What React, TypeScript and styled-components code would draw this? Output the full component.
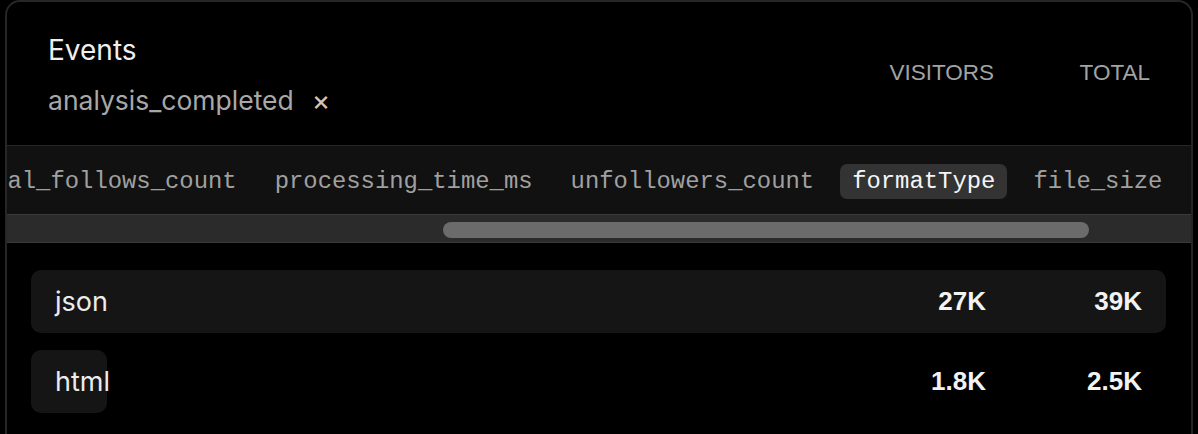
import React from "react";
import styled, { createGlobalStyle } from "styled-components";

const GlobalStyle = createGlobalStyle`
  html, body {
    margin: 0;
    padding: 0;
    background: #000;
    overflow: hidden;
  }
  body {
    font-family: Inter, "Noto Sans", sans-serif;
  }
`;

// what the property strip holds, and where it is scrolled to
const props = [
  "followers_count",
  "following_count",
  "import_source",
  "mutual_follows_count",
  "processing_time_ms",
  "unfollowers_count",
  "formatType",
  "file_size",
  "platform",
  "device",
];
const activeProp = "formatType";
const scroll = { left: 799, content: 2170, view: 1184 };

const rows = [
  { name: "json", visitors: 27000, total: 39000 },
  { name: "html", visitors: 1800, total: 2500 },
];

function fmt(n: number) {
  if (n >= 10000) return Math.round(n / 1000) + "K";
  if (n >= 1000) return (n / 1000).toFixed(1).replace(/\.0$/, "") + "K";
  return String(n);
}

export default function App() {
  const max = Math.max(...rows.map((r) => r.visitors));
  const thumbLeft = (scroll.left / scroll.content) * 100;
  const thumbWidth = (scroll.view / scroll.content) * 100;

  return (
    <>
      <GlobalStyle />
      <Page>
        <Card>
          <Header>
            <div>
              <Title>Events</Title>
              <Filter>
                <span>analysis_completed</span>
                <Close>×</Close>
              </Filter>
            </div>
            <Columns>
              <ColHead>VISITORS</ColHead>
              <ColHead>TOTAL</ColHead>
            </Columns>
          </Header>

          <Strip>
            <TabRow $offset={scroll.left}>
              {props.map((p) => (
                <Tab key={p} $active={p === activeProp}>
                  {p}
                </Tab>
              ))}
            </TabRow>
          </Strip>
          <ScrollTrack>
            <Thumb style={{ marginLeft: thumbLeft + "%", width: thumbWidth + "%" }} />
          </ScrollTrack>

          <List>
            {rows.map((r) => (
              <Row key={r.name}>
                <Bar style={{ width: (r.visitors / max) * 100 + "%" }} />
                <Name>{r.name}</Name>
                <Num>{fmt(r.visitors)}</Num>
                <Num>{fmt(r.total)}</Num>
              </Row>
            ))}
          </List>
        </Card>
      </Page>
    </>
  );
}

const Page = styled.div`
  padding: 0 5px;
  background: #000;
  height: 434px;
`;

const Card = styled.div`
  border: 2px solid #262626;
  border-bottom: none;
  border-radius: 15px 15px 0 0;
  background: #000;
  min-height: 470px;
  overflow: hidden;
`;

const Header = styled.div`
  display: flex;
  justify-content: space-between;
  align-items: center;
  height: 143px;
  padding: 0 41px 0 41px;
  box-sizing: border-box;
`;

const Title = styled.div`
  color: #efefef;
  font-size: 28px;
  line-height: 34px;
  margin-top: 3px;
`;

const Filter = styled.div`
  display: flex;
  align-items: center;
  gap: 18px;
  margin-top: 16px;
  color: #a8a8a8;
  font-size: 26.5px;
  line-height: 34px;
`;

const Close = styled.span`
  color: #c8c8c8;
  font-size: 28px;
  font-weight: 400;
`;

const Columns = styled.div`
  display: flex;
  margin-top: -2px;
`;

const ColHead = styled.div`
  width: 156px;
  text-align: right;
  color: #a3a3a3;
  font-family: "Liberation Sans", Arial, sans-serif;
  font-size: 22.5px;
`;

const Strip = styled.div`
  border-top: 1px solid #262626;
  background: #111;
  height: 68px;
  overflow: hidden;
  display: flex;
  align-items: center;
`;

const TabRow = styled.div<{ $offset: number }>`
  display: flex;
  gap: 14px;
  flex-shrink: 0;
  margin-top: 2px;
  transform: translateX(${(p) => -p.$offset}px);
`;

const Tab = styled.div<{ $active?: boolean }>`
  flex-shrink: 0;
  padding: 0 12px;
  height: 35px;
  line-height: 35px;
  border-radius: 7px;
  font-family: "Liberation Mono", "DejaVu Sans Mono", monospace;
  font-size: 23.88px;
  white-space: nowrap;
  color: ${(p) => (p.$active ? "#f5f5f5" : "#a0a0a0")};
  background: ${(p) => (p.$active ? "#333" : "transparent")};
`;

const ScrollTrack = styled.div`
  border-top: 1px solid #3a3a3a;
  border-bottom: 1px solid #3a3a3a;
  background: #2b2b2b;
  padding-top: 7px;
  box-sizing: border-box;
  height: 29px;
`;

const Thumb = styled.div`
  height: 16px;
  border-radius: 8px;
  background: #6b6b6b;
`;

const List = styled.div`
  display: flex;
  flex-direction: column;
  gap: 17px;
  padding: 27px 25px 0 24px;
`;

const Row = styled.div`
  position: relative;
  display: flex;
  align-items: center;
  height: 63px;
  padding: 0 24px;
`;

const Bar = styled.div`
  position: absolute;
  left: 0;
  top: 0;
  bottom: 0;
  border-radius: 10px;
  background: #151515;
`;

const Name = styled.div`
  position: relative;
  flex: 1;
  color: #ececec;
  font-size: 27px;
`;

const Num = styled.div`
  position: relative;
  width: 156px;
  text-align: right;
  color: #f2f2f2;
  font-family: "Liberation Sans", Arial, sans-serif;
  font-weight: 700;
  font-size: 26px;
`;
